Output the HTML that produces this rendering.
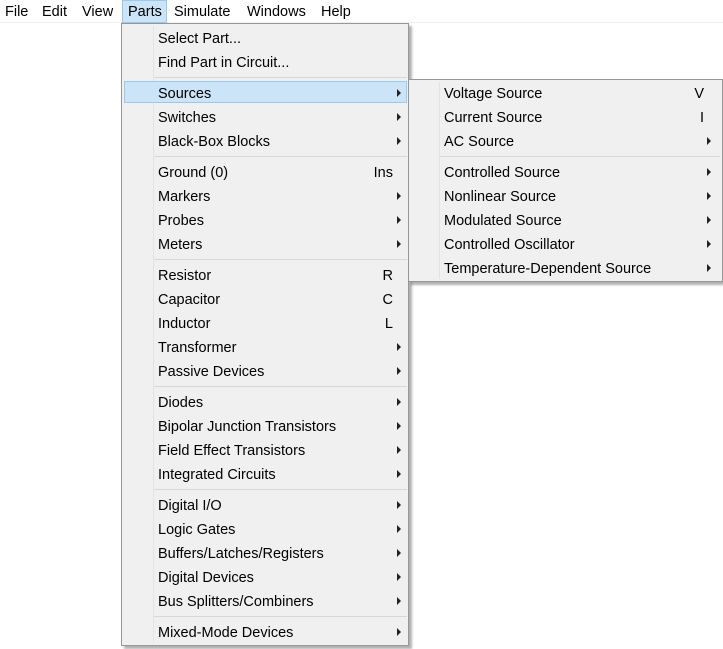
<!DOCTYPE html>
<html><head><style>
*{margin:0;padding:0;box-sizing:border-box}
body{width:723px;height:649px;background:#fff;position:relative;overflow:hidden;font-family:"Liberation Sans",sans-serif;font-size:14.5px;color:#000}
.bar{position:absolute;left:0;top:0;width:723px;height:23px;background:#fff;border-bottom:1px solid #f0f0f0}
.bar span{position:absolute;top:4px}
.sel{position:absolute;left:122px;top:0;width:45px;height:23px;background:#cce4f7;border:1px solid #99c9ef}
.menu{position:absolute;background:#f0f0f0;border:1px solid #979797;box-shadow:3px 3px 2px rgba(0,0,0,.3)}
.gut{position:absolute;width:1px;background:#e3e3e3}
.it{position:absolute;height:24px;line-height:26px}
.sc{position:absolute;height:24px;line-height:26px;text-align:right}
.ar{position:absolute;width:0;height:0;border-top:4px solid transparent;border-bottom:4px solid transparent;border-left:4px solid #222}
.sp{position:absolute;height:1px;background:#d7d7d7}
.hl{position:absolute;background:#cce4f7;border:1px solid #99c9ef}
</style></head><body>
<div class="bar"></div>
<div class="sel"></div>
<div class="bar" style="background:none;border:none">
<span style="left:5px">File</span><span style="left:42px">Edit</span><span style="left:82px">View</span><span style="left:128px">Parts</span><span style="left:174px">Simulate</span><span style="left:247px">Windows</span><span style="left:321px">Help</span>
</div>

<div class="menu" style="left:121px;top:23px;width:288px;height:623px"></div>
<div class="gut" style="left:153px;top:26px;height:617px"></div>
<div class="hl" style="left:124px;top:81px;width:283px;height:22px"></div>

<div class="menu" style="left:408px;top:79px;width:315px;height:203px"></div>
<div class="gut" style="left:439px;top:82px;height:197px"></div>

<div id="m1"></div>
<script>
var L=[["Select Part...",""],["Find Part in Circuit...",""],0,["Sources",">"],["Switches",">"],["Black-Box Blocks",">"],0,["Ground (0)","Ins"],["Markers",">"],["Probes",">"],["Meters",">"],0,["Resistor","R"],["Capacitor","C"],["Inductor","L"],["Transformer",">"],["Passive Devices",">"],0,["Diodes",">"],["Bipolar Junction Transistors",">"],["Field Effect Transistors",">"],["Integrated Circuits",">"],0,["Digital I/O",">"],["Logic Gates",">"],["Buffers/Latches/Registers",">"],["Digital Devices",">"],["Bus Splitters/Combiners",">"],0,["Mixed-Mode Devices",">"]];
var S=[["Voltage Source","V"],["Current Source","I"],["AC Source",">"],0,["Controlled Source",">"],["Nonlinear Source",">"],["Modulated Source",">"],["Controlled Oscillator",">"],["Temperature-Dependent Source",">"]];
var h="";
function build(list,y,tx,sx,ax,sr,sw){
 for(var i=0;i<list.length;i++){var e=list[i];
  if(!e){h+='<div class="sp" style="left:'+sx+'px;top:'+(y+3)+'px;width:'+sw+'px"></div>';y+=7;continue;}
  h+='<div class="it" style="left:'+tx+'px;top:'+y+'px">'+e[0]+'</div>';
  if(e[1]==">")h+='<div class="ar" style="left:'+ax+'px;top:'+(y+8)+'px"></div>';
  else if(e[1])h+='<div class="sc" style="left:'+(sr-60)+'px;width:60px;top:'+y+'px">'+e[1]+'</div>';
  y+=24;}
}
build(L,26,158,154,397,393,253);
build(S,81,444,440,707,704,280);
document.getElementById("m1").innerHTML=h;
</script>
</body></html>
